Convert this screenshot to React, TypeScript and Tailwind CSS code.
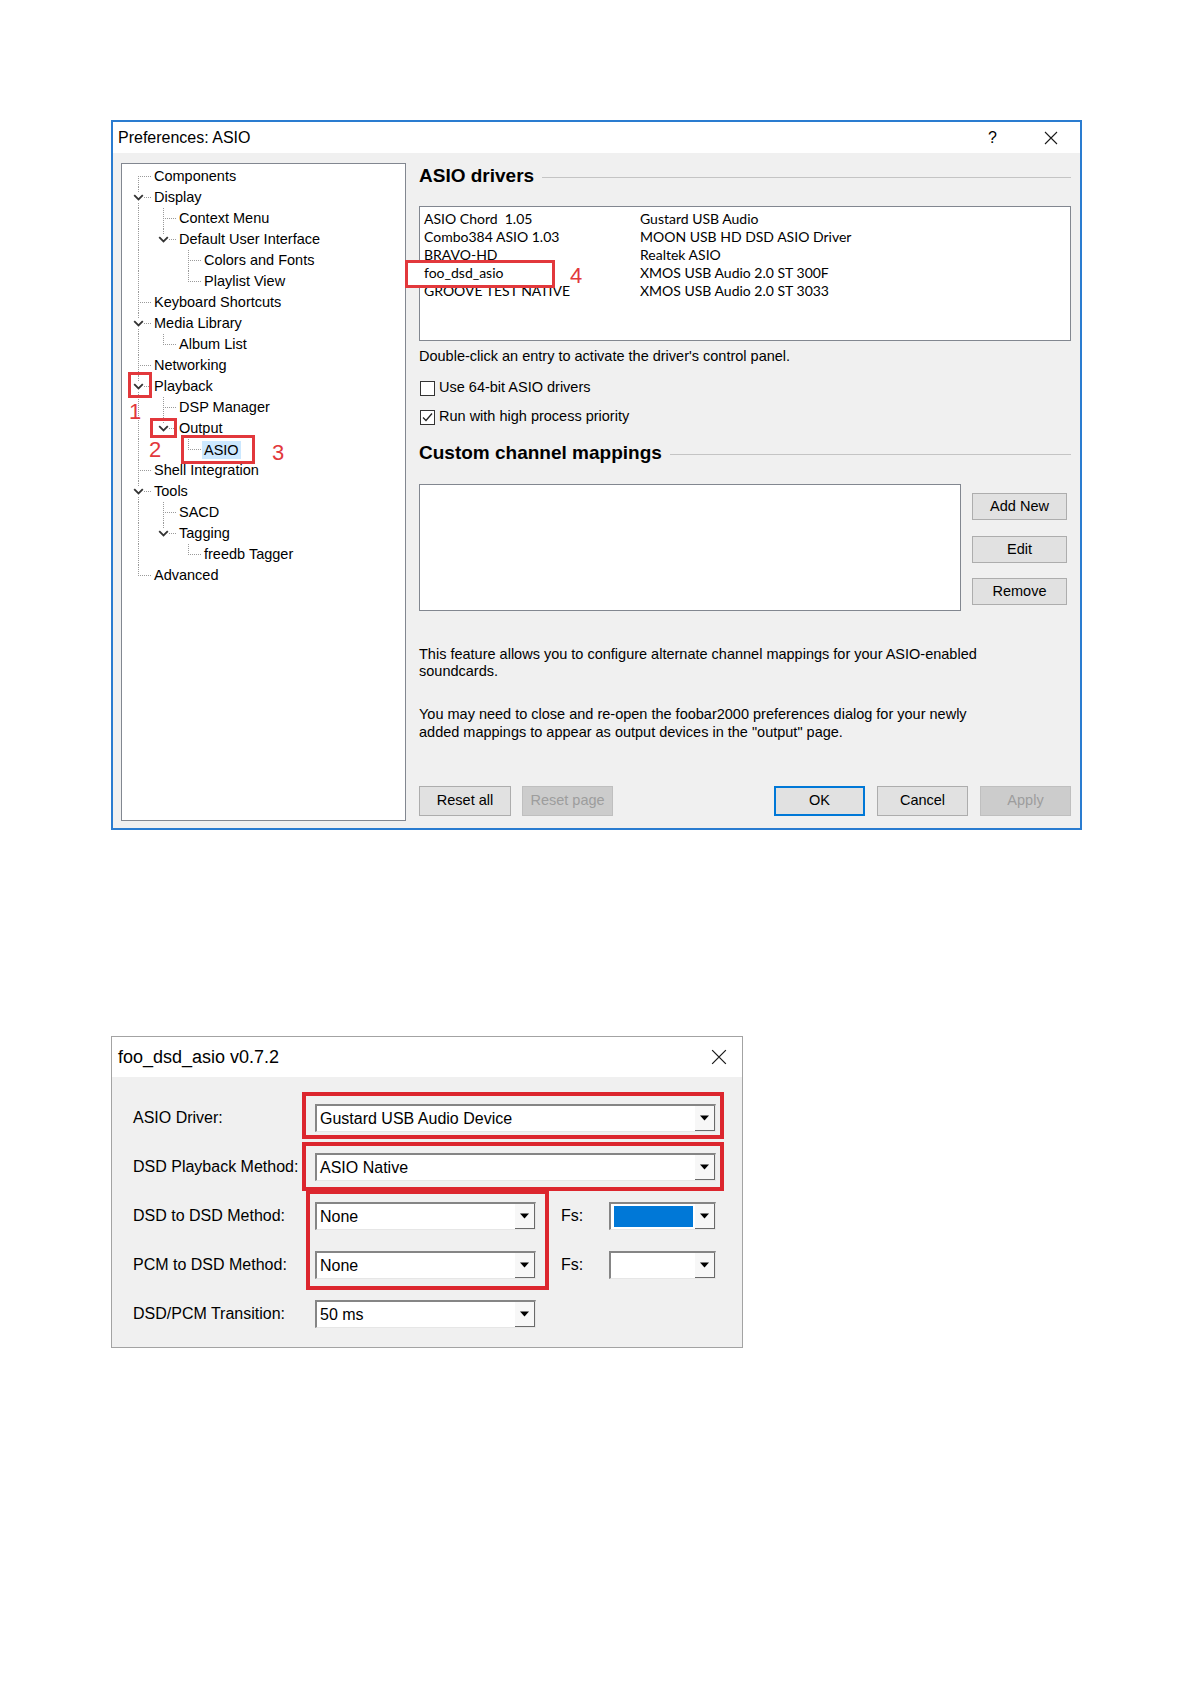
import React from 'react';

type TreeNode = { label: string; children?: TreeNode[] };

type TreeRow = {
  label: string;
  depth: number;
  expanded: boolean;
  hasNext: boolean;
  first: boolean;
  guides: boolean[];
};

const TREE: TreeNode[] = [
  { label: 'Components' },
  {
    label: 'Display',
    children: [
      { label: 'Context Menu' },
      { label: 'Default User Interface', children: [{ label: 'Colors and Fonts' }, { label: 'Playlist View' }] },
    ],
  },
  { label: 'Keyboard Shortcuts' },
  { label: 'Media Library', children: [{ label: 'Album List' }] },
  { label: 'Networking' },
  {
    label: 'Playback',
    children: [{ label: 'DSP Manager' }, { label: 'Output', children: [{ label: 'ASIO' }] }],
  },
  { label: 'Shell Integration' },
  {
    label: 'Tools',
    children: [{ label: 'SACD' }, { label: 'Tagging', children: [{ label: 'freedb Tagger' }] }],
  },
  { label: 'Advanced' },
];

const DRIVERS: [string, string][] = [
  ['ASIO Chord  1.05', 'Gustard USB Audio'],
  ['Combo384 ASIO 1.03', 'MOON USB HD DSD ASIO Driver'],
  ['BRAVO-HD', 'Realtek ASIO'],
  ['foo_dsd_asio', 'XMOS USB Audio 2.0 ST 300F'],
  ['GROOVE TEST NATIVE', 'XMOS USB Audio 2.0 ST 3033'],
];

function flatten(nodes: TreeNode[], depth = 0, guides: boolean[] = [], out: TreeRow[] = []): TreeRow[] {
  nodes.forEach((n, i) => {
    const hasNext = i < nodes.length - 1;
    out.push({ label: n.label, depth, expanded: !!n.children, hasNext, first: depth === 0 && i === 0, guides });
    if (n.children) flatten(n.children, depth + 1, [...guides, hasNext], out);
  });
  return out;
}

function CloseIcon({ size }: { size: number }) {
  return (
    <svg width={size} height={size} viewBox="0 0 14 14">
      <path d="M1 1L13 13M13 1L1 13" stroke="#1a1a1a" strokeWidth="1.1" />
    </svg>
  );
}

function Chevron() {
  return (
    <div className="absolute left-[7px] top-[6px] flex h-[9px] w-[11px] items-center justify-center bg-white">
      <svg width="11" height="7" viewBox="0 0 11 7">
        <path d="M1.2 1.2L5.5 5.5L9.8 1.2" fill="none" stroke="#333" strokeWidth="1.8" />
      </svg>
    </div>
  );
}

function Tree() {
  const rows = flatten(TREE);
  const dots = 'border-dotted border-[#9a9a9a]';
  return (
    <div className="relative w-[285px] shrink-0 border border-[#828790] bg-white pl-[4px] pt-[2px] text-[14.5px]">
      {rows.map((row) => (
        <div key={row.label} className="flex h-[21px] items-center">
          {row.guides.map((on, i) => (
            <div key={i} className="relative h-full w-[25px] shrink-0">
              {on && <div className={`absolute left-[12px] top-0 h-full border-l ${dots}`} />}
            </div>
          ))}
          <div className="relative h-full w-[25px] shrink-0">
            {!row.first && <div className={`absolute left-[12px] top-0 h-[11px] border-l ${dots}`} />}
            {row.hasNext && <div className={`absolute left-[12px] top-[10px] h-[11px] border-l ${dots}`} />}
            <div className={`absolute left-[12px] top-[10px] w-[13px] border-t ${dots}`} />
            {row.expanded && <Chevron />}
          </div>
          {row.label === 'ASIO' ? (
            <span className="ml-[1px] bg-[#cce8ff] px-[2px] leading-[18px]">{row.label}</span>
          ) : (
            <span className="ml-[3px] whitespace-nowrap">{row.label}</span>
          )}
        </div>
      ))}

      {/* annotations */}
      <div className="absolute left-[6px] top-[208px] h-[26px] w-[24px] border-[3px] border-[#e2383c]" />
      <div className="absolute left-[7px] top-[237px] text-[22px] leading-[22px] text-[#e2383c]">1</div>
      <div className="absolute left-[28px] top-[254px] h-[20px] w-[27px] border-[3px] border-[#e2383c]" />
      <div className="absolute left-[27px] top-[275px] text-[22px] leading-[22px] text-[#e2383c]">2</div>
      <div className="absolute left-[59px] top-[271px] h-[29px] w-[74px] border-[3px] border-[#e2383c]" />
      <div className="absolute left-[150px] top-[278px] text-[22px] leading-[22px] text-[#e2383c]">3</div>
    </div>
  );
}

function Heading({ children, className }: { children: React.ReactNode; className: string }) {
  return (
    <div className={`flex h-[24px] items-center ${className}`}>
      <span className="whitespace-nowrap text-[19px] font-bold">{children}</span>
      <div className="ml-[8px] mt-[2px] h-px flex-1 bg-[#c4c4c4]" />
    </div>
  );
}

function Checkbox({ checked, label, className }: { checked?: boolean; label: string; className: string }) {
  return (
    <div className={`flex h-[20px] items-center ${className}`}>
      <div className="ml-[1px] flex h-[15px] w-[15px] items-center justify-center border border-[#333] bg-white">
        {checked && (
          <svg width="13" height="13" viewBox="0 0 13 13">
            <path d="M2 6.5L5 9.5L11 2.5" fill="none" stroke="#222" strokeWidth="1.3" />
          </svg>
        )}
      </div>
      <span className="ml-[4px]">{label}</span>
    </div>
  );
}

function Btn({ children, size, kind }: { children: React.ReactNode; size: string; kind?: 'primary' | 'disabled' }) {
  const tone =
    kind === 'primary'
      ? 'border-2 border-[#0078d7] bg-[#e1e1e1] text-black'
      : kind === 'disabled'
        ? 'border border-[#bfbfbf] bg-[#cccccc] text-[#9d9d9d]'
        : 'border border-[#adadad] bg-[#e1e1e1] text-black';
  return <div className={`flex shrink-0 items-center justify-center ${size} ${tone}`}>{children}</div>;
}

function Preferences() {
  return (
    <div className="flex h-[710px] w-[971px] flex-col border-2 border-[#2a7cd0] bg-[#f0f0f0]">
      <div className="flex h-[31px] shrink-0 items-center bg-white pl-[5px] text-[16px]">
        <span>Preferences: ASIO</span>
        <div className="ml-auto flex items-center gap-[47px] pr-[22px]">
          <span className="text-[16px]">?</span>
          <CloseIcon size={14} />
        </div>
      </div>

      <div className="flex min-h-0 flex-1 pb-[7px] pl-[8px] pr-[9px] pt-[10px] text-[14.5px]">
        <Tree />

        <div className="ml-[13px] flex w-[652px] flex-col">
          <Heading className="mt-[1px]">ASIO drivers</Heading>

          <div className="relative mt-[18px] h-[135px] shrink-0 border border-[#828790] bg-white pl-[4px] pt-[2px] font-['Lato',sans-serif] text-[14px]">
            {DRIVERS.map(([a, b]) => (
              <div key={a} className="flex h-[18px] items-center">
                <div className="w-[216px] whitespace-pre">
                  {a === 'foo_dsd_asio' ? <span className="relative z-10">{a}</span> : a}
                </div>
                <div>{b}</div>
              </div>
            ))}
            <div className="absolute left-[-15px] top-[53px] h-[28px] w-[150px] border-[3px] border-[#e2383c] bg-white" />
            <div className="absolute left-[150px] top-[58px] font-['Liberation_Sans',sans-serif] text-[22px] leading-[22px] text-[#e2383c]">
              4
            </div>
          </div>

          <div className="mt-[6px] leading-[18px]">Double-click an entry to activate the driver's control panel.</div>
          <Checkbox className="mt-[13px]" label="Use 64-bit ASIO drivers" />
          <Checkbox className="mt-[9px]" checked label="Run with high process priority" />

          <Heading className="mt-[14px]">Custom channel mappings</Heading>

          <div className="mt-[19px] flex h-[127px] shrink-0">
            <div className="w-[542px] border border-[#828790] bg-white" />
            <div className="ml-[11px] flex flex-col pt-[9px]">
              <Btn size="h-[27px] w-[95px]">Add New</Btn>
              <div className="mt-[16px]">
                <Btn size="h-[27px] w-[95px]">Edit</Btn>
              </div>
              <div className="mt-[15px]">
                <Btn size="h-[27px] w-[95px]">Remove</Btn>
              </div>
            </div>
          </div>

          <p className="mt-[35px] leading-[17px]">
            This feature allows you to configure alternate channel mappings for your ASIO-enabled
            <br />
            soundcards.
          </p>
          <p className="mt-[25px] leading-[18px]">
            You may need to close and re-open the foobar2000 preferences dialog for your newly
            <br />
            added mappings to appear as output devices in the "output" page.
          </p>

          <div className="mb-[5px] mt-auto flex h-[30px]">
            <div className="flex gap-[11px]">
              <Btn size="h-[30px] w-[92px]">Reset all</Btn>
              <Btn size="h-[30px] w-[91px]" kind="disabled">
                Reset page
              </Btn>
            </div>
            <div className="ml-auto flex gap-[12px]">
              <Btn size="h-[30px] w-[91px]" kind="primary">
                OK
              </Btn>
              <Btn size="h-[30px] w-[91px]">Cancel</Btn>
              <Btn size="h-[30px] w-[91px]" kind="disabled">
                Apply
              </Btn>
            </div>
          </div>
        </div>
      </div>
    </div>
  );
}

function Combo({ size, value, blue }: { size: string; value?: string; blue?: boolean }) {
  return (
    <div
      className={`flex h-[28px] shrink-0 ${size} border-l-2 border-t-2 border-b border-r border-l-[#858585] border-t-[#858585] border-b-[#e6e6e6] border-r-[#e6e6e6] bg-white`}
    >
      <div className="flex min-w-0 flex-1 items-center p-[2px] pl-[3px] leading-none">
        {blue ? <div className="h-full w-full bg-[#0078d7]" /> : value}
      </div>
      <div className="flex w-[20px] items-center justify-center border-b border-r border-b-[#6a6a6a] border-r-[#6a6a6a] bg-[#f7f7f7]">
        <svg width="9" height="6" viewBox="0 0 9 6">
          <path d="M0 0.5H9L4.5 5.5Z" fill="#000" />
        </svg>
      </div>
    </div>
  );
}

function DsdDialog() {
  const label = 'w-[182px] shrink-0 whitespace-nowrap';
  return (
    <div className="mt-[206px] flex h-[312px] w-[632px] flex-col border border-[#a3a3a3] bg-[#f0f0f0]">
      <div className="flex h-[40px] shrink-0 items-center bg-white pl-[6px] pr-[15px] text-[18px]">
        <span>foo_dsd_asio v0.7.2</span>
        <div className="ml-auto">
          <CloseIcon size={16} />
        </div>
      </div>

      <div className="relative flex flex-1 flex-col gap-[21px] pl-[21px] pt-[27px] text-[16px]">
        <div className="flex h-[28px] items-center">
          <div className={label}>ASIO Driver:</div>
          <Combo size="w-[401px]" value="Gustard USB Audio Device" />
        </div>
        <div className="flex h-[28px] items-center">
          <div className={label}>DSD Playback Method:</div>
          <Combo size="w-[401px]" value="ASIO Native" />
        </div>
        <div className="flex h-[28px] items-center">
          <div className={label}>DSD to DSD Method:</div>
          <Combo size="w-[221px]" value="None" />
          <div className="ml-[25px] w-[48px]">Fs:</div>
          <Combo size="w-[107px]" blue />
        </div>
        <div className="flex h-[28px] items-center">
          <div className={label}>PCM to DSD Method:</div>
          <Combo size="w-[221px]" value="None" />
          <div className="ml-[25px] w-[48px]">Fs:</div>
          <Combo size="w-[107px]" />
        </div>
        <div className="flex h-[28px] items-center">
          <div className={label}>DSD/PCM Transition:</div>
          <Combo size="w-[221px]" value="50 ms" />
        </div>

        {/* annotations */}
        <div className="absolute left-[190px] top-[15px] h-[47px] w-[422px] border-4 border-[#dc262e]" />
        <div className="absolute left-[190px] top-[65px] h-[49px] w-[422px] border-4 border-[#dc262e]" />
        <div className="absolute left-[194px] top-[113px] h-[100px] w-[243px] border-4 border-[#dc262e]" />
      </div>
    </div>
  );
}

export default function App() {
  return (
    <div className="min-h-[1685px] w-[1192px] bg-white pl-[111px] pt-[120px] font-['Liberation_Sans',Arial,sans-serif] text-black">
      <Preferences />
      <DsdDialog />
    </div>
  );
}
